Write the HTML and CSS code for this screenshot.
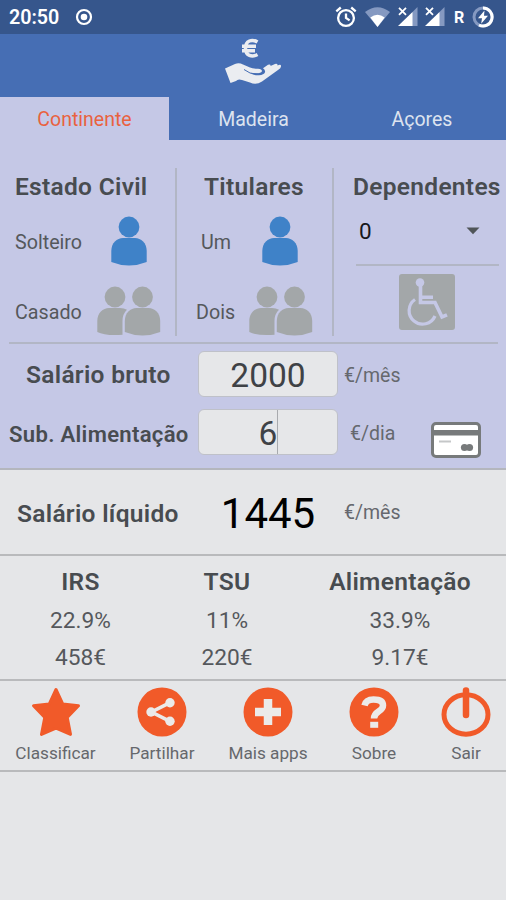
FILE: index.html
```html
<!DOCTYPE html>
<html lang="pt">
<head>
<meta charset="utf-8">
<title>Salário líquido</title>
<link rel="stylesheet" href="styles.css">
</head>
<body>
<svg class="defs" width="0" height="0" aria-hidden="true">
  <symbol id="person" viewBox="0 0 36 50">
    <circle cx="18" cy="11" r="10.4"/>
    <path d="M.3 46V35C.3 27 6 22 12 22h12c6 0 11.700 5 11.700 13v11Q27 49.500 18 49.500T.3 46z"/>
  </symbol>
  <symbol id="couple" viewBox="0 0 64 50">
    <circle cx="18" cy="11" r="10.400"/>
    <path d="M.3 46V35C.3 27 6 22 12 22h11q4 0 7 1.800-4.500 4.200-4.500 11.200v13.800Q8 50 .3 46z"/>
    <circle cx="45.500" cy="11" r="10.400"/>
    <path d="M27.800 46V35c0-8 5.700-13 11.700-13h12c6 0 11.700 5 11.700 13v11q-8.700 3.500-17.700 3.500T27.800 46z"/>
  </symbol>
  <symbol id="signal" viewBox="0 0 20 20">
    <path d="M19.500 0v19H14V5.500z" fill="#8599c1"/>
    <path d="M0 19 14.500 5v14z" fill="#fff"/>
    <path d="m1 .8 7 7m0-7-7 7" stroke="#fff" stroke-width="1.800"/>
  </symbol>
</svg>

<header>
  <div class="status">
    <span class="clock">20:50</span>
    <svg class="record" width="18" height="18" viewBox="0 0 18 18"><circle cx="9" cy="9" r="7" fill="none" stroke="#fff" stroke-width="2.200"/><circle cx="9" cy="9" r="3.300" fill="#fff"/></svg>
    <svg class="alarm" width="22" height="22" viewBox="0 0 22 22" fill="none" stroke="#fff" stroke-width="2.300"><circle cx="11" cy="12" r="7.900"/><path d="m1.300 5.300 4.500-3.800m10.400 0 4.500 3.800M11 7.500V12l3.600 2.400"/></svg>
    <svg class="wifi" width="25" height="20" viewBox="0 0 25 20"><path d="M0 5Q12.500-4.500 25 5L12.500 20z" fill="#8599c1"/><path d="M5.300 10.500q7.200-5.500 14.400 0L12.500 20z" fill="#fff"/></svg>
    <svg class="sig1" width="20" height="20"><use href="#signal"/></svg>
    <svg class="sig2" width="20" height="20"><use href="#signal"/></svg>
    <span class="roaming">R</span>
    <svg class="battery" width="22" height="22" viewBox="0 0 22 22"><circle cx="11" cy="11" r="9" fill="none" stroke="#8599c1" stroke-width="3"/><path d="M11 2a9 9 0 1 1-4 17" fill="none" stroke="#fff" stroke-width="3"/><path d="M12.500 4.500 6 12.200H10l-.8 5.500L16 9.800H12z" fill="#fff"/></svg>
  </div>
  <div class="brand">
    <svg width="58" height="48" viewBox="0 0 58 48" fill="none">
      <path d="M33.500 5C28 1.800 21.500 3.500 21.500 11.200S28 20.500 33.500 17.500M18 9.200H32m-14 4.600H31" stroke="#ebedf1" stroke-width="3.500"/>
      <path d="M1 31.500 11 27q4-1.500 8 .5l7 3q2.500 1.200 8 1.200 4 0 4 2.500-1.500 2.500-7 2l-5-.5q4 3 9 2.500 5-.5 6-3 .5-2.500-2-4l5-3.500q3-.8 2.500 1.200l4.500-2q3-.5 2.500 1.500 4-1.500 3.500 1Q57 31 54 33L38 44.500q-6 4-12 1l-8-2.500q-4-1.500-6 1l-5.500 2z" fill="#ebedf1"/>
      <path d="M20 32.500q6 5 13 4.500c5 0 7-1 6.500-3.500" stroke="#466eb4" stroke-width="1"/>
    </svg>
  </div>
  <nav class="tabs">
    <a class="tab active">Continente</a>
    <a class="tab">Madeira</a>
    <a class="tab">Açores</a>
  </nav>
</header>

<main>
  <section class="inputs">
    <div class="options">
      <div class="group civil">
        <h2>Estado Civil</h2>
        <div class="choice"><span>Solteiro</span><svg class="on" width="36" height="50"><use href="#person"/></svg></div>
        <div class="choice second"><span>Casado</span><svg class="off" width="64" height="50"><use href="#couple"/></svg></div>
      </div>
      <div class="group holders">
        <h2>Titulares</h2>
        <div class="choice"><span>Um</span><svg class="on" width="36" height="50"><use href="#person"/></svg></div>
        <div class="choice second"><span>Dois</span><svg class="off" width="64" height="50"><use href="#couple"/></svg></div>
      </div>
      <div class="group dependents">
        <h2>Dependentes</h2>
        <div class="select"><span>0</span><svg width="14" height="8" viewBox="0 0 14 8"><path d="M.5.500h13L7 7.300z" fill="#505558"/></svg></div>
        <svg class="disabled" width="56" height="56" viewBox="0 0 56 56"><rect width="56" height="56" rx="3" fill="#a3a7a9"/><g fill="none" stroke="#c5c8e6" stroke-width="3.600"><path d="M21.500 8v20.500H36l7 14.500 5-2.200M22 23.200h12"/><path d="M16 25.500a13.500 13.500 0 1 0 20 16.500" stroke-width="3.200"/></g><circle cx="21" cy="8.500" r="4.300" fill="#c5c8e6"/></svg>
      </div>
    </div>
    <div class="field gross"><h2>Salário bruto</h2><div class="box"><span>2000</span></div><span class="unit">€/mês</span></div>
    <div class="field meal"><h2>Sub. Alimentação</h2><div class="box"><span>6</span><i class="caret"></i></div><span class="unit">€/dia</span>
      <svg class="card" width="50" height="36" viewBox="0 0 50 36"><rect x="1.500" y="1.500" width="47" height="33" rx="3.500" fill="#fff" stroke="#777a7b" stroke-width="3"/><path d="M2 10.800h46" stroke="#777a7b" stroke-width="5.500"/><path d="M8 19.500h12" stroke="#c5c7c8" stroke-width="2"/><g fill="#777a7b"><circle cx="33.500" cy="25.500" r="3.600"/><circle cx="38.500" cy="25.500" r="3.600"/></g></svg>
    </div>
  </section>

  <section class="net"><h2>Salário líquido</h2><span class="amount">1445</span><span class="unit">€/mês</span></section>

  <section class="breakdown">
    <div><h2>IRS</h2><p>22.9%</p><p>458€</p></div>
    <div><h2>TSU</h2><p>11%</p><p>220€</p></div>
    <div><h2>Alimentação</h2><p>33.9%</p><p>9.17€</p></div>
  </section>

  <footer class="actions">
    <a><svg width="50" height="50" viewBox="0 0 50 50"><path d="m25 2.500 6.800 14.600 15.700 1.700-11.300 11.600 3.300 17L25 41.200l-14.500 6.200 3.300-17L2.500 18.800l15.700-1.700z" fill="#f15a29" stroke="#f15a29" stroke-width="3" stroke-linejoin="round"/></svg><span>Classificar</span></a>
    <a><svg width="50" height="50" viewBox="0 0 50 50"><circle cx="25" cy="25" r="24.500" fill="#f15a29"/><path d="M33 15.700 14.500 25 33 34.300" fill="none" stroke="#ebeae9" stroke-width="3.600"/><g fill="#ebeae9"><circle cx="33" cy="15.700" r="4.700"/><circle cx="14" cy="25" r="4.700"/><circle cx="33" cy="34.300" r="4.700"/></g></svg><span>Partilhar</span></a>
    <a><svg width="50" height="50" viewBox="0 0 50 50"><circle cx="25" cy="25" r="24.500" fill="#f15a29"/><path d="M25 12v26M12 25h26" stroke="#ebeae9" stroke-width="8.500"/></svg><span>Mais apps</span></a>
    <a><svg width="50" height="50" viewBox="0 0 50 50"><circle cx="25" cy="25" r="24.500" fill="#f15a29"/><path d="M15.500 18.500c1-4.500 4.500-6 9-6 6 0 9.500 2 9.500 6 0 6.500-9 5-9 13" fill="none" stroke="#ebeae9" stroke-width="6.500"/><path d="M21.200 34.800h8v6h-8z" fill="#ebeae9"/></svg><span>Sobre</span></a>
    <a><svg width="50" height="50" viewBox="0 0 50 50"><ellipse cx="25" cy="27.500" rx="22" ry="19.700" fill="none" stroke="#f15a29" stroke-width="5"/><path d="M25 3.500V28" stroke="#f15a29" stroke-width="6.500" stroke-linecap="round"/></svg><span>Sair</span></a>
  </footer>
</main>
</body>
</html>
```

FILE: styles.css
```css
* { box-sizing: border-box; }
body { margin: 0; width: 506px; height: 900px; overflow: hidden; background: #e5e6e8; color: #55585c; font-family: Roboto, sans-serif; }
h2, p { margin: 0; }
h2 { color: #484c50; font-size: 24.5px; font-weight: 600; line-height: 30px; letter-spacing: .3px; white-space: nowrap; }
svg { display: block; flex: none; }
.defs { position: absolute; }

.status { display: flex; align-items: center; height: 34px; padding-left: 9px; background: #36568c; color: #fff; }
.clock { width: 66px; font-size: 19.7px; font-weight: 600; line-height: 34px; padding-top: 2px; }
.alarm { margin-left: 242px; }
.wifi { margin-left: 8px; }
.sig1 { margin-left: 8px; }
.sig2 { margin-left: 7px; }
.roaming { width: 18px; margin-left: 9px; font-size: 16px; font-weight: 700; line-height: 20px; padding-top: 1px; }
.brand { display: flex; justify-content: center; height: 63px; padding-top: 3px; background: #466eb4; }
.tabs { display: grid; grid-template-columns: 169px 169px 168px; height: 43px; background: #466eb4; }
.tab { color: #dde3ef; font-size: 19.5px; line-height: 45px; text-align: center; }
.tab.active { background: #c5c8e6; color: #e9623f; }

.inputs { height: 330px; background: #c5c8e6; border-bottom: 2px solid #b4b6bd; }
.options { display: grid; grid-template-columns: 168px 157px 164px; height: 204px; margin: 0 8px 0 9px; padding: 28px 0 7px; border-bottom: 2px solid #b2b6c5; }
.group { border-right: 2px solid #b2b6c5; }
.group h2 { padding-top: 4px; height: 48px; }
.civil h2 { padding-left: 6px; }
.holders h2 { padding-left: 27px; }
.choice { display: flex; align-items: center; justify-content: space-between; height: 50px; font-size: 19.7px; }
.choice span { padding-top: 2px; }
.civil .choice { padding: 0 28px 0 6px; }
.civil .second { padding-right: 14px; }
.holders .choice { padding: 0 34px 0 24px; }
.holders .second { padding: 0 19px 0 19px; }
.group .second { margin-top: 20px; }
.on { fill: #3f82c8; }
.off { fill: #a3a7a9; }
.dependents { border: 0; padding-left: 19px; }
.dependents h2 { height: 42px; }
.select { display: flex; align-items: center; justify-content: space-between; height: 56px; margin: 0 -1px 0 3px; padding: 0 19px 13px 3px; border-bottom: 2px solid #b2b6c5; color: #16171a; font-size: 22.5px; }
.disabled { margin: 8px 0 0 46px; }

.field { display: flex; align-items: center; height: 46px; }
.gross { margin-top: 7px; }
.meal { margin-top: 12px; }
.field h2 { width: 198px; padding-top: 2px; }
.gross h2 { padding-left: 26px; }
.meal h2 { padding-left: 9px; padding-top: 4px; font-size: 22.1px; letter-spacing: .3px; }
.box { position: relative; width: 140px; height: 46px; background: #e6e7e9; border: 1px solid #bfc1c9; border-radius: 6px; color: #3f4246; font-size: 33.5px; line-height: 47px; text-align: center; }
.caret { position: absolute; left: 78px; top: 0; width: 1px; height: 44px; background: #a8aaae; }
.unit { font-size: 19.5px; color: #65686e; }
.field .unit { padding-top: 2px; }
.gross .unit, .net .unit { margin-left: 6px; }
.meal .unit { margin-left: 12px; width: 81px; }
.card { margin-top: 16px; }

.net { display: flex; align-items: center; height: 86px; border-bottom: 2px solid #b9babc; }
.net h2 { width: 198px; padding-left: 17px; padding-top: 3px; }
.amount { width: 140px; color: #000; font-size: 42px; text-align: center; padding-top: 3px; }
.net .unit { padding-top: 1px; }

.breakdown { display: grid; grid-template-columns: 161px 132px 214px; height: 125px; padding-top: 11px; border-bottom: 2px solid #b9babc; text-align: center; }
.breakdown h2 { height: 35px; line-height: 30px; }
.breakdown p { height: 37px; font-size: 22.7px; line-height: 38px; }

.actions { display: grid; grid-template-columns: 111px 102px 110px 102px 82px; height: 91px; padding-top: 6px; border-bottom: 2px solid #b9babc; }
.actions a { display: flex; flex-direction: column; align-items: center; font-size: 17.2px; line-height: 20px; color: #65686c; white-space: nowrap; }
.actions span { margin-top: 6px; }
```
